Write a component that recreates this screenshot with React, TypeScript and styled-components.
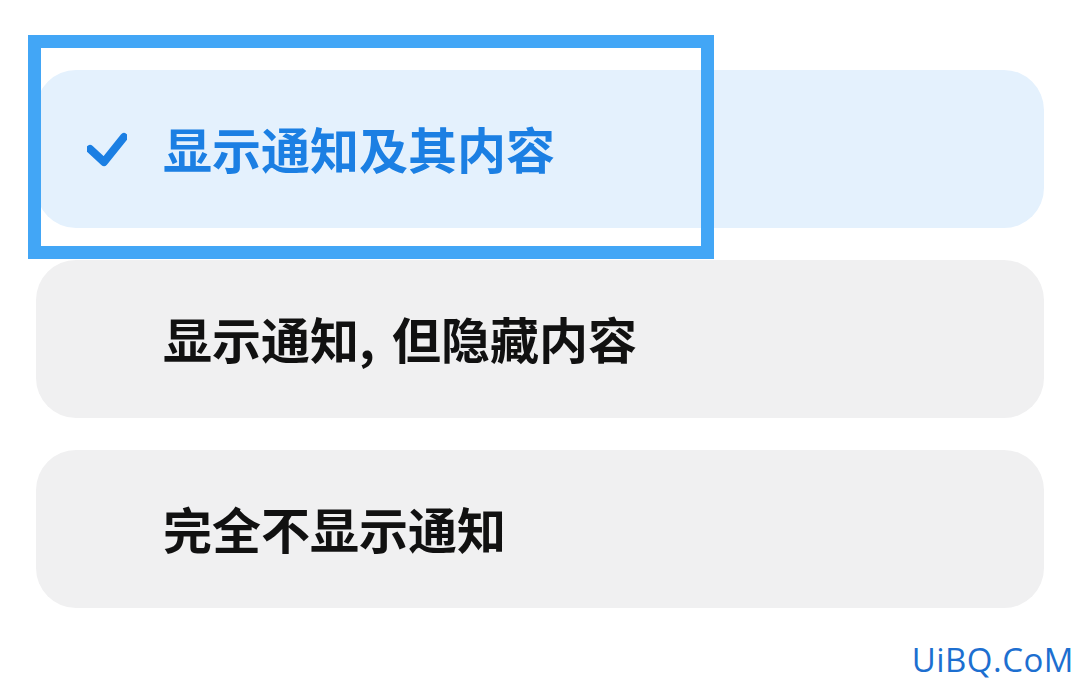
import styled, { createGlobalStyle } from "styled-components";

const Global = createGlobalStyle`
  html, body {
    margin: 0;
    padding: 0;
    background: #ffffff;
  }
  body {
    font-family: "Noto Sans CJK SC", "Noto Sans", sans-serif;
  }
`;

const Page = styled.div`
  position: relative;
  width: 1080px;
  height: 684px;
  box-sizing: border-box;
  padding: 70px 36px 0 36px;
  overflow: hidden;
`;

const List = styled.div`
  position: relative;
  display: flex;
  flex-direction: column;
  gap: 32px;
`;

const Option = styled.div<{ $active?: boolean }>`
  display: flex;
  align-items: center;
  height: 158px;
  padding-left: 51px;
  border-radius: 40px;
  background: ${(p) => (p.$active ? "#e4f1fd" : "#f0f0f1")};
  color: ${(p) => (p.$active ? "#1b7fe3" : "#111111")};
`;

const CheckSlot = styled.div`
  width: 40px;
  height: 40px;
  margin-right: 36px;
  flex-shrink: 0;
  display: flex;
  align-items: center;
  justify-content: center;
`;

const Label = styled.span`
  font-size: 49px;
  font-weight: 700;
  line-height: 1;
  margin-top: -4px;
  word-spacing: 6px;
`;

// 截图中的高亮框，叠在第一项上
const Highlight = styled.div`
  position: absolute;
  left: -8px;
  top: -35px;
  width: 686px;
  height: 224px;
  box-sizing: border-box;
  border: 13px solid #42a6f6;
  pointer-events: none;
`;

const Watermark = styled.div`
  position: absolute;
  right: 6px;
  bottom: 2px;
  font-family: "Open Sans", "DejaVu Sans", sans-serif;
  font-size: 33px;
  color: #1d6fd0;
  letter-spacing: 0.5px;
`;

const Check = () => (
  <svg width="40" height="40" viewBox="0 0 40 40">
    <polyline
      points="3,20 17,33 37,8"
      fill="none"
      stroke="#1b7fe3"
      strokeWidth="8"
      strokeLinecap="round"
      strokeLinejoin="round"
    />
  </svg>
);

const options = [
  { label: "显示通知及其内容", active: true },
  { label: "显示通知, 但隐藏内容", active: false },
  { label: "完全不显示通知", active: false },
];

export default function App() {
  return (
    <>
      <Global />
      <Page>
        <List>
          {options.map((o) => (
            <Option key={o.label} $active={o.active}>
              <CheckSlot>{o.active && <Check />}</CheckSlot>
              <Label>{o.label}</Label>
            </Option>
          ))}
          <Highlight />
        </List>
        <Watermark>UiBQ.CoM</Watermark>
      </Page>
    </>
  );
}
